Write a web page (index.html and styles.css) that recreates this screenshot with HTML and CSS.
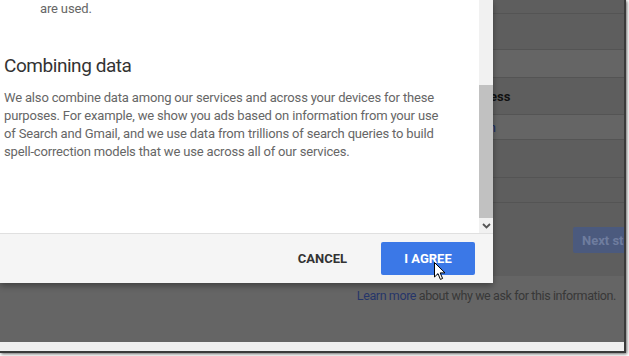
FILE: index.html
```html
<!DOCTYPE html>
<html>
<head>
<meta charset="utf-8">
<link rel="stylesheet" href="styles.css">
</head>
<body>
<div class="frame">
  <div class="page">
    <div class="row r1"></div>
    <div class="row r2"></div>
    <div class="row r3 light"></div>
    <div class="row r4"><span class="label">Business</span></div>
    <div class="row r5 light"><span class="link-frag">Sign in</span></div>
    <div class="row r6"></div>
    <div class="row r7"></div>
    <div class="row r8"><button class="next">Next step</button></div>
    <div class="row r9 light"><p class="learn"><a class="learn-link">Learn more</a> about why we ask for this information.</p></div>
    <div class="row r10"></div>
  </div>

  <div class="dialog">
    <div class="dialog-body">
      <div class="scroll-content">
        <ul class="list"><li>are used.</li></ul>
        <h2 class="heading">Combining data</h2>
        <p class="para">We also combine data among our services and across your devices for these purposes. For example, we show you ads based on information from your use of Search and Gmail, and we use data from trillions of search queries to build spell-correction models that we use across all of our services.</p>
      </div>
      <div class="scrollbar">
        <div class="track"></div>
        <div class="thumb"></div>
        <div class="arrow">
          <svg width="9" height="6" viewBox="0 0 9 6"><path d="M1 1 L4.5 4.5 L8 1" fill="none" stroke="#555" stroke-width="1.8"/></svg>
        </div>
      </div>
    </div>
    <div class="dialog-footer">
      <button class="btn-cancel">CANCEL</button>
      <button class="btn-agree">I AGREE</button>
    </div>
  </div>

  <svg class="cursor" width="12" height="19" viewBox="0 0 12 19">
    <path d="M0.5 0.5 L0.5 15 L4 11.6 L6.4 17.4 L8.6 16.5 L6.2 10.9 L11 10.9 Z" fill="#fff" stroke="#000" stroke-width="1" stroke-linejoin="round"/>
  </svg>
</div>
</body>
</html>
```
FILE: styles.css
```css
* { box-sizing: border-box; }
html, body { margin: 0; padding: 0; background: #fff; }
body { width: 629px; height: 356px; overflow: hidden; font-family: Roboto, "Noto Sans", Arial, sans-serif; }

.frame {
  position: relative;
  width: 626px;
  height: 353px;
  overflow: hidden;
  border-right: 2px solid #3a3a3a;
  border-bottom: 2px solid #3a3a3a;
  box-shadow: 1px 1px 3px rgba(0,0,0,0.6);
}

.page { display: flex; flex-direction: column; background: #5e5e5e; height: 100%; }
.row { flex: none; border-bottom: 1px solid #545454; background: #5e5e5e; position: relative; }
.row.light { background: #656565; }
.r1 { height: 14px; }
.r2 { height: 36px; }
.r3 { height: 28px; }
.r4 { height: 37px; display: flex; align-items: center; padding-left: 457px; }
.r5 { height: 25px; display: flex; align-items: center; padding-left: 457px; }
.r6 { height: 38px; }
.r7 { height: 25px; }
.r8 { height: 73px; border-bottom: none; display: flex; align-items: flex-start; justify-content: flex-end; padding-top: 24px; }
.r9 { height: 66px; border-bottom: none; display: flex; justify-content: flex-end; padding-right: 8px; }
.r10 { flex: 1; background: #efefef; border-bottom: none; }

.label { font-weight: 700; font-size: 13px; color: #111; }
.link-frag { font-size: 13px; color: #1a2c66; }

.next {
  width: 51px; height: 26px; margin: 0; border: none; border-radius: 2px 0 0 2px;
  background: #4b5a7e; color: #6f7d9f; font: 700 13px Roboto, Arial, sans-serif;
  padding: 0 0 0 9px; text-align: left; white-space: nowrap; overflow: hidden;
}
.learn { margin: 12px 0 0; font-size: 12.5px; letter-spacing: -0.4px; color: #383838; }
.learn-link { color: #253569; }

.dialog {
  position: absolute; left: 0; top: 0; width: 493px; height: 283px;
  background: #fff; display: flex; flex-direction: column;
  box-shadow: 0 3px 6px rgba(0,0,0,0.35);
  border-bottom-right-radius: 2px;
}
.dialog-body { flex: 1; display: flex; min-height: 0; }
.scroll-content { flex: 1; padding: 0 30px 0 4px; overflow: hidden; }
.list { margin: 0; padding: 0 0 0 36px; list-style: none; font-size: 13px; line-height: 18px; color: #666; letter-spacing: -0.15px; }
.heading { margin: 36px 0 0; font-size: 19px; letter-spacing: -0.45px; font-weight: 400; color: #333; line-height: 24px; }
.para { margin: 11px 0 0; font-size: 13px; letter-spacing: -0.17px; line-height: 18px; color: #666; }

.scrollbar { width: 14px; flex: none; position: relative; background: #f1f1f1; margin-right: 0; }
.track { height: 85px; }
.thumb { height: 133px; background: #c1c1c1; }
.arrow { height: 15px; display: flex; align-items: center; justify-content: center; }

.dialog-footer {
  flex: none; height: 50px; background: #f5f5f5; border-top: 1px solid #e0e0e0;
  display: flex; align-items: center; justify-content: flex-end; padding: 0 18px 0 0; gap: 20px;
}
.btn-cancel {
  border: none; background: transparent; font: 700 13px Roboto, Arial, sans-serif; color: #333;
  padding: 0 14px; height: 33px;
}
.btn-agree {
  border: none; background: #3b78e7; color: #fff; font: 700 13px Roboto, Arial, sans-serif;
  width: 94px; height: 33px; border-radius: 2px; padding: 0;
}

.cursor { position: absolute; left: 434px; top: 262px; }
```
